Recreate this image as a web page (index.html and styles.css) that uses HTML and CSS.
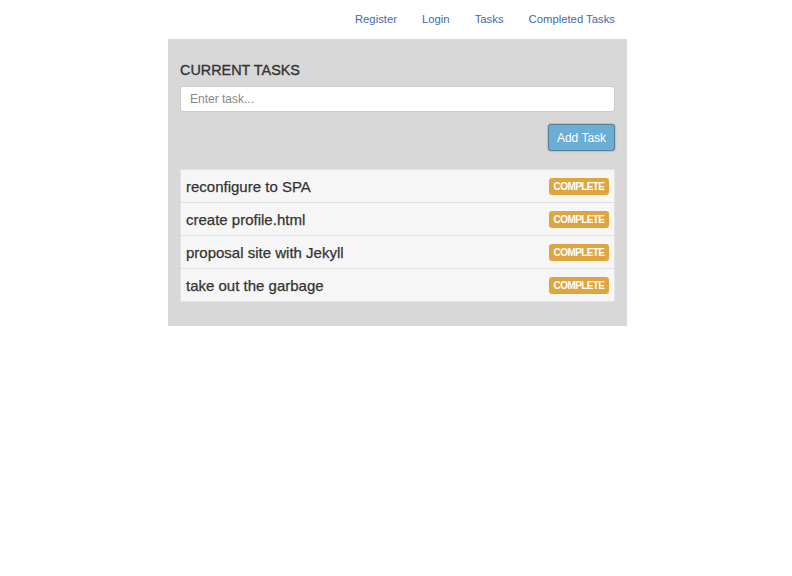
FILE: index.html
```html
<!DOCTYPE html>
<html>
<head>
<meta charset="utf-8">
<link rel="stylesheet" href="styles.css">
</head>
<body>
<div class="page">
  <nav class="nav">
    <a href="#">Register</a>
    <a href="#">Login</a>
    <a href="#">Tasks</a>
    <a href="#">Completed Tasks</a>
  </nav>
  <section class="panel">
    <h2 class="title">CURRENT TASKS</h2>
    <input class="task-input" type="text" placeholder="Enter task...">
    <div class="actions"><button class="add-btn">Add Task</button></div>
    <ul class="list">
      <li class="item"><span>reconfigure to SPA</span><span class="badge">COMPLETE</span></li>
      <li class="item"><span>create profile.html</span><span class="badge">COMPLETE</span></li>
      <li class="item"><span>proposal site with Jekyll</span><span class="badge">COMPLETE</span></li>
      <li class="item"><span>take out the garbage</span><span class="badge">COMPLETE</span></li>
    </ul>
  </section>
</div>
</body>
</html>
```
FILE: styles.css
```css
* { box-sizing: border-box; }
body {
  margin: 0;
  font-family: "Liberation Sans", Arial, sans-serif;
  color: #333;
  background: #fff;
}
.page {
  width: 459px;
  margin-left: 168px;
}
.nav {
  display: flex;
  justify-content: flex-end;
  gap: 25px;
  height: 39px;
  padding: 12px 12px 0 0;
  font-size: 11.3px;
}
.nav a {
  color: #4466b0;
  text-decoration: none;
  line-height: 14px;
}
.panel {
  background: #d8d8d8;
  padding: 20px 12px 24px 12px;
}
.title {
  margin: 0;
  font-size: 14.4px;
  font-weight: normal;
  -webkit-text-stroke: 0.35px #333;
  line-height: 22px;
  color: #333;
}
.task-input {
  display: block;
  width: 100%;
  height: 26px;
  margin-top: 5px;
  border: 1px solid #ccc;
  border-radius: 3px;
  background: #fff;
  padding: 0 9px;
  font-family: "Liberation Sans", Arial, sans-serif;
  font-size: 12px;
  color: #333;
  outline: none;
}
.task-input::placeholder { color: #888; }
.actions {
  display: flex;
  justify-content: flex-end;
  padding-top: 12px;
}
.add-btn {
  height: 27px;
  width: 67px;
  background: #6aaed6;
  color: #fff;
  border: 1px solid #5e7f93;
  border-radius: 3px;
  box-shadow: 0 0 2px rgba(0,0,0,0.4);
  font-family: "Liberation Sans", Arial, sans-serif;
  font-size: 12px;
  padding: 0;
}
.list {
  list-style: none;
  margin: 18px 0 0 0;
  padding: 0;
  border: 1px solid #e2e2e2;
}
.item {
  display: flex;
  justify-content: space-between;
  align-items: center;
  height: 33px;
  padding: 0 5px 0 5px;
  background: #f6f6f6;
  border-top: 1px solid #e0e0e0;
  font-size: 15px;
  -webkit-text-stroke: 0.25px #333;
  color: #333;
}
.item:first-child { border-top: none; height: 32px; }
.badge {
  background: #dfa63f;
  color: #fff;
  -webkit-text-stroke: 0;
  font-size: 10px;
  letter-spacing: -0.6px;
  font-weight: bold;
  border-radius: 3px;
  width: 60px;
  height: 17px;
  line-height: 17px;
  text-align: center;
}
```
